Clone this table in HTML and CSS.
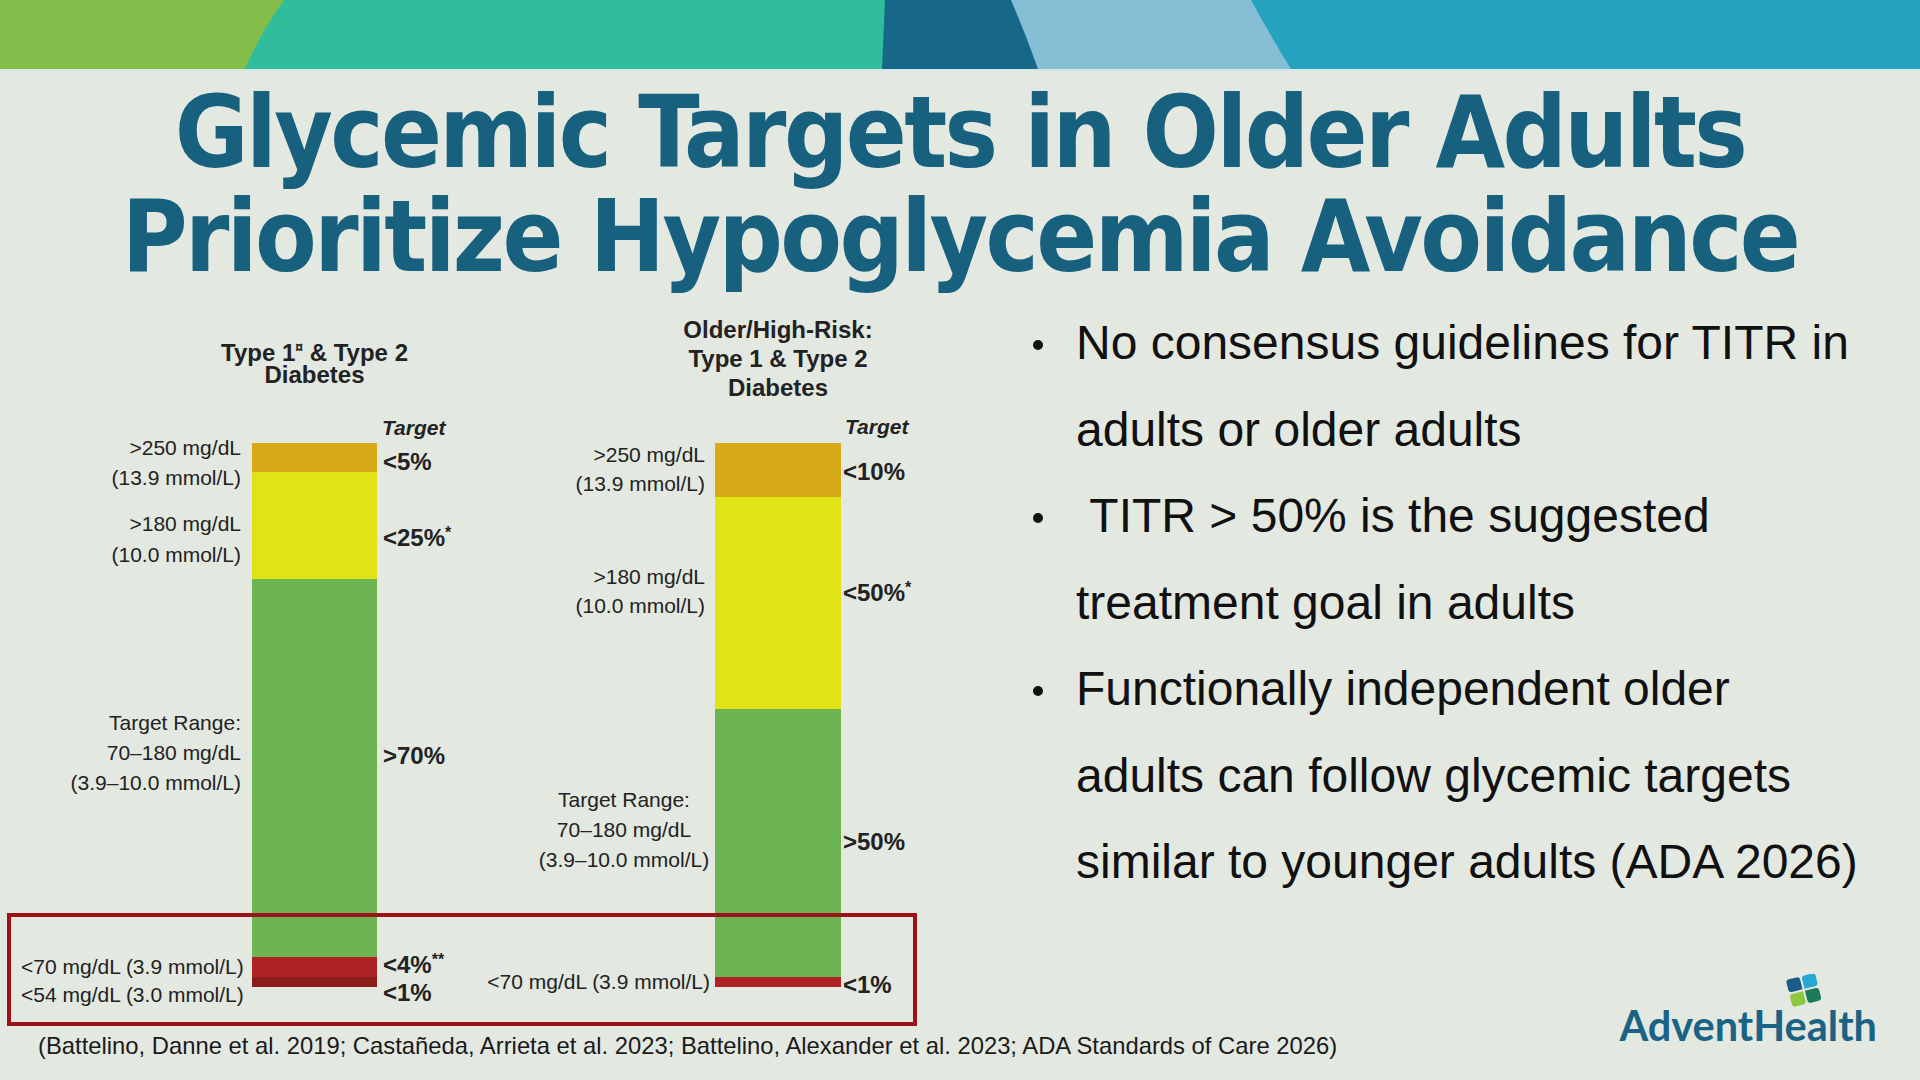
FILE: index.html
```html
<!DOCTYPE html>
<html lang="en">
<head>
<meta charset="utf-8">
<title>Glycemic Targets in Older Adults</title>
<link rel="stylesheet" href="styles.css">
</head>
<body>
<div class="slide">
  <header class="banner">
    <svg class="banner-svg" viewBox="0 0 1920 69" preserveAspectRatio="none" aria-hidden="true">
      <rect x="0" y="0" width="1920" height="69" fill="#84bd4a"/>
      <path d="M284 0 L1920 0 L1920 69 L245 69 Q262 30 284 0 Z" fill="#30bd9b"/>
      <path d="M885 0 L1920 0 L1920 69 L882 69 Z" fill="#176888"/>
      <path d="M1011 0 L1920 0 L1920 69 L1038 69 Q1026 35 1011 0 Z" fill="#86bfd5"/>
      <path d="M1251 0 L1920 0 L1920 69 L1291 69 Q1270 35 1251 0 Z" fill="#26a2c1"/>
    </svg>
  </header>

  <h1 class="title">Glycemic Targets in Older Adults<br>Prioritize Hypoglycemia Avoidance</h1>

  <main class="main">
    <section class="left-col">
      <div class="charts">
        <figure class="fig fig-a">
          <div class="fig-head head-a">
            <div class="title-anchor anchor-a">
              <div class="fig-title lh22">Type 1<span class="sup-cur">¤</span> &amp; Type 2<br>Diabetes</div>
            </div>
          </div>
          <div class="plot">
            <div class="bar bar-a">
              <div class="seg orange h-a1"></div>
              <div class="seg yellow h-a2"></div>
              <div class="seg green h-a3"></div>
              <div class="seg red h-a4"></div>
              <div class="seg dred h-a5"></div>
            </div>
            <div class="lbl a-r a-hi">&gt;250 mg/dL<br>(13.9 mmol/L)</div>
            <div class="lbl a-r a-mid">&gt;180 mg/dL<br>(10.0 mmol/L)</div>
            <div class="lbl a-r a-tr">Target Range:<br>70–180 mg/dL<br>(3.9–10.0 mmol/L)</div>
            <div class="lbl a-low">&lt;70 mg/dL (3.9 mmol/L)<br>&lt;54 mg/dL (3.0 mmol/L)</div>
            <div class="tgt a-tgt">Target</div>
            <div class="pct a-pc a-p1">&lt;5%</div>
            <div class="pct a-pc a-p2">&lt;25%<span class="sup-ast">*</span></div>
            <div class="pct a-pc a-p3">&gt;70%</div>
            <div class="pct a-pc a-p4">&lt;4%<span class="sup-ast">**</span></div>
            <div class="pct a-pc a-p5">&lt;1%</div>
          </div>
        </figure>

        <figure class="fig fig-b">
          <div class="fig-head head-b">
            <div class="title-anchor anchor-b">
              <div class="fig-title lh29">Older/High-Risk:<br>Type 1 &amp; Type 2<br>Diabetes</div>
            </div>
          </div>
          <div class="plot">
            <div class="bar bar-b">
              <div class="seg orange h-b1"></div>
              <div class="seg yellow h-b2"></div>
              <div class="seg green h-b3"></div>
              <div class="seg red h-b4"></div>
            </div>
            <div class="lbl b-r b-hi">&gt;250 mg/dL<br>(13.9 mmol/L)</div>
            <div class="lbl b-r b-mid">&gt;180 mg/dL<br>(10.0 mmol/L)</div>
            <div class="lbl b-tr">Target Range:<br>70–180 mg/dL<br>(3.9–10.0 mmol/L)</div>
            <div class="lbl b-low">&lt;70 mg/dL (3.9 mmol/L)</div>
            <div class="tgt b-tgt">Target</div>
            <div class="pct b-pc b-p1">&lt;10%</div>
            <div class="pct b-pc b-p2">&lt;50%<span class="sup-ast">*</span></div>
            <div class="pct b-pc b-p3">&gt;50%</div>
            <div class="pct b-pc b-p4">&lt;1%</div>
          </div>
        </figure>
      </div>
      <div class="highlight"></div>
      <p class="citation">(Battelino, Danne et al. 2019; Castañeda, Arrieta et al. 2023; Battelino, Alexander et al. 2023; ADA Standards of Care 2026)</p>
    </section>

    <section class="right-col">
      <ul class="bullets">
        <li>No consensus guidelines for TITR in<br>adults or older adults</li>
        <li>&nbsp;TITR &gt; 50% is the suggested<br>treatment goal in adults</li>
        <li>Functionally independent older<br>adults can follow glycemic targets<br>similar to younger adults (ADA 2026)</li>
      </ul>
      <div class="logo">
        <svg class="logo-mark" viewBox="0 0 36 34" aria-hidden="true">
          <g transform="rotate(-14 18 17)">
            <path d="M3 5 Q3 2 6 2 L14 2 Q17 2 17 5 L17 15 L6 15 Q3 15 3 12 Z" fill="#1d5c86"/>
            <path d="M19 5 Q19 2 22 2 L30 2 Q33 2 33 5 L33 12 Q33 15 30 15 L19 15 Z" fill="#2aa6d2"/>
            <path d="M3 20 Q3 17 6 17 L17 17 L17 27 Q17 30 14 30 L6 30 Q3 30 3 27 Z" fill="#8dc63f"/>
            <path d="M19 17 L30 17 Q33 17 33 20 L33 27 Q33 30 30 30 L22 30 Q19 30 19 27 Z" fill="#1b7a5a"/>
          </g>
        </svg>
        <div class="logo-text">AdventHealth</div>
      </div>
    </section>
  </main>
</div>
</body>
</html>
```
FILE: styles.css
```css
html, body {
  margin: 0;
  padding: 0;
}
body {
  background: #e3e8e1;
}
.slide {
  width: 1920px;
  height: 1080px;
  overflow: hidden;
  display: flex;
  flex-direction: column;
  background: #e3e8e1;
  color: #222;
  font-family: "Liberation Sans", Arial, sans-serif;
}

/* banner */
.banner {
  height: 69px;
  flex: 0 0 auto;
  border-bottom: 2px solid #d3e8e4;
}
.banner-svg {
  display: block;
  width: 1920px;
  height: 69px;
}

/* title */
.title {
  margin: 10px 0 0 0;
  height: 208px;
  text-align: center;
  font-family: "DejaVu Sans", Verdana, sans-serif;
  font-stretch: condensed;
  font-weight: bold;
  font-size: 100px;
  line-height: 104px;
  letter-spacing: -2.6px;
  color: #17617f;
  white-space: nowrap;
}

/* main area */
.main {
  flex: 1 1 auto;
  display: flex;
  min-height: 0;
}
.left-col {
  position: relative;
  width: 960px;
  flex: 0 0 960px;
}
.charts {
  display: flex;
}
.fig {
  margin: 0;
  width: 480px;
  flex: 0 0 480px;
}
.fig-head {
  height: 154px;
  box-sizing: border-box;
}
.head-a {
  padding-top: 53px;
  padding-left: 252px;
}
.head-b {
  padding-top: 26px;
  padding-left: 235px;
}
.title-anchor {
  display: flex;
  justify-content: center;
}
.anchor-a { width: 125px; }
.anchor-b { width: 126px; }
.fig-title {
  flex: 0 0 auto;
  white-space: nowrap;
  text-align: center;
  font-weight: bold;
  font-size: 24px;
  color: #222;
}
.lh22 { line-height: 22px; }
.lh29 { line-height: 29px; }
.sup-cur {
  font-size: 14px;
  vertical-align: 9px;
  line-height: 0;
}

.plot {
  position: relative;
  height: 544px;
}
.bar {
  display: flex;
  flex-direction: column;
  height: 544px;
}
.bar-a { margin-left: 252px; width: 125px; }
.bar-b { margin-left: 235px; width: 126px; }
.seg { flex: 0 0 auto; }
.orange { background: #d8aa17; }
.yellow { background: #e1e316; }
.green  { background: #6db553; }
.red    { background: #ae2125; }
.dred   { background: #8a1d19; }
.h-a1 { height: 29px; }
.h-a2 { height: 107px; }
.h-a3 { height: 378px; }
.h-a4 { height: 20px; }
.h-a5 { height: 10px; }
.h-b1 { height: 54px; }
.h-b2 { height: 212px; }
.h-b3 { height: 268px; }
.h-b4 { height: 10px; }

/* chart annotations (placed at data positions) */
.lbl {
  position: absolute;
  font-size: 21px;
  color: #222;
  white-space: nowrap;
}
.a-r { right: 239px; text-align: right; }
.a-hi  { top: -10px; line-height: 30px; }
.a-mid { top: 65px;  line-height: 31px; }
.a-tr  { top: 265px; line-height: 30px; }
.a-low { left: 21px; top: 510px; line-height: 28px; }

.b-r { right: 255px; text-align: right; }
.b-hi  { top: -3px;  line-height: 29px; }
.b-mid { top: 119px; line-height: 29px; }
.b-tr  { left: 44px; width: 200px; text-align: center; top: 342px; line-height: 30px; }
.b-low { right: 250px; top: 525px; line-height: 28px; }

.tgt {
  position: absolute;
  font-size: 21px;
  font-weight: bold;
  font-style: italic;
  line-height: 24px;
  color: #222;
}
.a-tgt { left: 382px; top: -27px; }
.b-tgt { left: 365px; top: -28px; }

.pct {
  position: absolute;
  font-size: 24px;
  font-weight: bold;
  line-height: 28px;
  color: #222;
  white-space: nowrap;
}
.sup-ast {
  font-size: 16px;
  vertical-align: 8px;
  line-height: 0;
}
.a-pc { left: 383px; }
.a-p1 { top: 5px; }
.a-p2 { top: 81px; }
.a-p3 { top: 299px; }
.a-p4 { top: 508px; }
.a-p5 { top: 536px; }
.b-pc { left: 363px; }
.b-p1 { top: 15px; }
.b-p2 { top: 136px; }
.b-p3 { top: 385px; }
.b-p4 { top: 528px; }

.highlight {
  position: absolute;
  left: 7px;
  top: 624px;
  width: 910px;
  height: 113px;
  box-sizing: border-box;
  border: 4px solid #9e1119;
}

.citation {
  margin: 46px 0 0 0;
  padding-left: 38px;
  font-size: 23.8px;
  line-height: 26px;
  color: #1a1a1a;
  white-space: nowrap;
}

/* right column */
.right-col {
  flex: 1 1 auto;
  display: flex;
  flex-direction: column;
}
.bullets {
  list-style: none;
  margin: 11px 0 0 0;
  padding: 0 0 0 68px;
  font-size: 48px;
  line-height: 86.5px;
  color: #111;
}
.bullets li {
  position: relative;
  padding-left: 48px;
  white-space: nowrap;
}
.bullets li::before {
  content: "";
  position: absolute;
  left: 5px;
  top: 40px;
  width: 10px;
  height: 10px;
  border-radius: 50%;
  background: #111;
}

.logo {
  margin-top: auto;
  padding: 0 43px 35px 0;
  display: flex;
  flex-direction: column;
  align-items: flex-end;
}
.logo-mark {
  display: block;
  width: 36px;
  height: 34px;
  margin-right: 55px;
  margin-bottom: -3px;
}
.logo-text {
  font-family: Lato, "Open Sans", sans-serif;
  font-weight: 700;
  font-size: 41.5px;
  line-height: 40px;
  letter-spacing: 0;
  color: #1a6384;
}
```
